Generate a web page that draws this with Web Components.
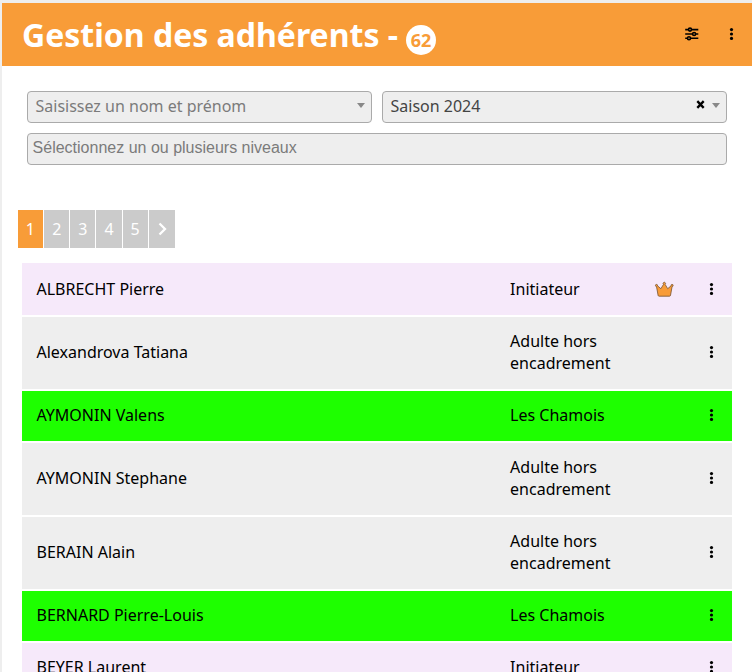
<!DOCTYPE html>
<html lang="fr">
<head>
<meta charset="utf-8">
<title>Gestion des adhérents</title>
<style>
html,body{margin:0;height:100%;overflow:hidden}
body{background:#eee;font:16px/22px "Noto Sans",sans-serif;color:#000}
</style>
</head>
<body>
<members-page></members-page>
<script>
function define(name, html, setup) {
  customElements.define(name, class extends HTMLElement {
    connectedCallback() {
      if (this.shadowRoot) return;
      const t = document.createElement('template');
      t.innerHTML = html;
      this.attachShadow({mode: 'open'}).append(t.content.cloneNode(true));
      if (setup) setup(this, this.shadowRoot);
    }
  });
}

define('more-icon', `<style>:host{display:block;width:6px;height:14px}svg{display:block}</style>
<svg width="6" height="14" viewBox="0 0 6 14"><circle cx="3.5" cy="2.6" r="1.6"/><circle cx="3.5" cy="7" r="1.6"/><circle cx="3.5" cy="11.4" r="1.6"/></svg>`);

define('sliders-icon', `<style>:host{display:block;width:14px;height:14px}svg{display:block}</style>
<svg width="14" height="14" viewBox="0 0 14 14" fill="none" stroke="#000" stroke-width="1.6">
<path d="M.2 2.6H3.5M7 2.6H13.3M.2 7H7.3M10.8 7H13.3M.2 11.3H2.5M6 11.3H13.3"/>
<circle cx="5" cy="2.6" r="1.5"/><circle cx="9.1" cy="7" r="1.5"/><circle cx="4" cy="11.3" r="1.5"/></svg>`);

define('crown-icon', `<style>:host{display:block;width:20px;height:16px}svg{display:block}</style>
<svg width="20" height="16" viewBox="0 0 20 16" fill="#f89c38" stroke="#75502f" stroke-width=".8" stroke-linejoin="round">
<path d="M4.1 14.4 2.5 5.5A1.05 1.05 0 1 1 3.5 4.8L6.9 7.7 9.5 3.4A1.2 1.2 0 1 1 11.1 3.4L13.7 7.7 17.1 4.8A1.05 1.05 0 1 1 18.1 5.5L16.5 14.4Q16.3 15.2 15.5 15.2H5.1Q4.3 15.2 4.1 14.4Z"/></svg>`);

define('page-header', `<style>
:host{display:flex;align-items:center;height:63px;background:#f89c38;padding:0 18px 0 20px;box-sizing:border-box}
h1{margin:0;flex:1;display:flex;align-items:center;font-size:32px;line-height:40px;font-weight:700;color:#fff;white-space:pre}
.count{width:30px;height:30px;border-radius:50%;background:#fff;color:#f89c38;font-size:18px;line-height:31px;text-align:center;margin:10px 0 0 8px}
.tools{display:flex;gap:29px;align-items:center;margin-bottom:1px}
</style><h1><span><slot></slot></span><span class="count"><slot name="count"></slot></span></h1>
<div class="tools"><sliders-icon></sliders-icon><more-icon></more-icon></div>`);

define('select-box', `<style>
:host{display:flex;box-sizing:border-box;height:32px;border:1px solid #aaa;border-radius:4px;background:#eee;padding:0 6px 0 7.5px;color:#444;line-height:28px}
:host([empty]){color:#7b7b7b}
:host([multiple]){padding-left:4.6px;font-family:"Liberation Sans",sans-serif}
.text{flex:1}
.clear{display:none;width:9px;height:9px;margin:7.5px 7px 0 0}
:host([clearable]) .clear{display:block}
.arrow{border:4px solid transparent;border-top:5px solid #888;border-bottom:0;height:0;margin-top:11px}
:host([multiple]) .arrow{display:none}
</style><span class="text"><slot></slot></span>
<svg class="clear" viewBox="0 0 9 9"><path d="M1.3 1.1 7.7 7.9M7.7 1.1 1.3 7.9" stroke="#000" stroke-width="2.3"/></svg><span class="arrow"></span>`);

define('member-filters', `<style>
:host{display:grid;grid-template-columns:1fr 1fr;gap:10px;padding:25px 25px 0}
.wide{grid-column:1/3}
</style><select-box empty>Saisissez un nom et prénom</select-box><select-box clearable>Saison 2024</select-box>
<select-box class="wide" multiple empty>Sélectionnez un ou plusieurs niveaux</select-box>`);

define('page-nav', `<style>
:host{display:flex;gap:1px;padding:45px 0 0 16px;color:#fff}
span{height:38px;line-height:38px;padding:0 8px;background:#cbcbcb}
.current{padding:0 8.3px 0 7.7px;background:#f89c38}
.next{padding:0;width:26px;display:flex;align-items:center;justify-content:center}
</style><span class="current">1</span><span>2</span><span>3</span><span>4</span><span>5</span>
<span class="next"><svg width="10" height="14" viewBox="0 0 10 14" fill="none" stroke="#fff" stroke-width="2.3"><path d="M2.5 1.5 8 7 2.5 12.5"/></svg></span>`);

define('member-row', `<style>
:host{display:grid;grid-template-columns:473.6px 130px 1fr 6px;align-items:center;box-sizing:border-box;min-height:50px;padding:13px 18px 15px 14.5px;background:#eee}
:host([tone=staff]){background:#f6e9fa}
:host([chief]){min-height:52px;padding-top:14px;padding-bottom:14px}
:host([tone=active]){background:#1eff00}
.mark{display:flex;padding-left:13.7px}
</style><span><slot></slot></span><span><slot name="level"></slot></span><span class="mark"></span><more-icon></more-icon>`,
(host, root) => { if (host.hasAttribute('chief')) root.querySelector('.mark').append(document.createElement('crown-icon')); });

define('member-list', `<style>:host{display:flex;flex-direction:column;gap:2px;padding:15px 20px 0}</style>
<member-row tone="staff" chief>ALBRECHT Pierre<span slot="level">Initiateur</span></member-row>
<member-row>Alexandrova Tatiana<span slot="level">Adulte hors encadrement</span></member-row>
<member-row tone="active">AYMONIN Valens<span slot="level">Les Chamois</span></member-row>
<member-row>AYMONIN Stephane<span slot="level">Adulte hors encadrement</span></member-row>
<member-row>BERAIN Alain<span slot="level">Adulte hors encadrement</span></member-row>
<member-row tone="active">BERNARD Pierre-Louis<span slot="level">Les Chamois</span></member-row>
<member-row tone="staff">BEYER Laurent<span slot="level">Initiateur</span></member-row>`);

define('members-page', `<style>:host{display:block;height:100%;box-sizing:border-box;padding:3px 0 0 2px;overflow:hidden}
main{background:#fff;min-height:100%}</style>
<main><page-header>Gestion des adhérents -<span slot="count">62</span></page-header>
<member-filters></member-filters><page-nav></page-nav><member-list></member-list></main>`);
</script>
</body>
</html>
